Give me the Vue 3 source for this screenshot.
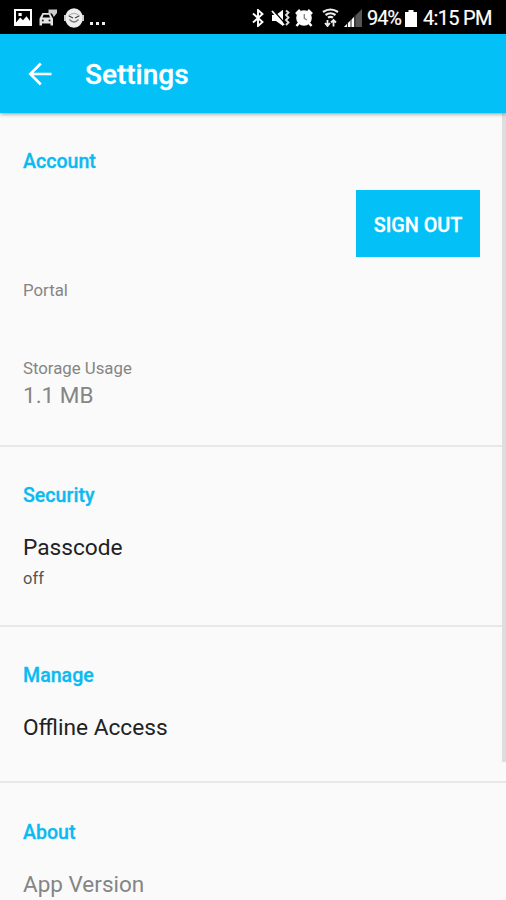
<script setup>
const sections = [
  { key: 'security', title: 'Security', rows: [{ label: 'Passcode', note: 'off' }] },
  { key: 'manage', title: 'Manage', rows: [{ label: 'Offline Access' }] },
  { key: 'about', title: 'About', rows: [{ label: 'App Version', muted: true }] },
]
</script>

<template>
  <div class="screen">
    <div class="status">
      <div class="left">
        <svg class="i-picture" width="18" height="17" viewBox="0 0 18 17">
          <rect x="1" y="1" width="16" height="15" fill="none" stroke="#fff" stroke-width="2" />
          <path d="M2 13.500L6.200 8.500L9 11.200L12.500 7.300L16 12V15H2Z" fill="#fff" />
          <rect x="4.500" y="4" width="3.200" height="3" fill="#fff" />
        </svg>
        <svg class="i-car" width="19" height="17" viewBox="0 0 19 17">
          <path d="M3.500 4H11L13 8L14 9.500V16.500H11.500V14.500H3V16.500H.5V9.500Z" fill="#e4e4e4" />
          <path d="M4.500 5.800H10L11 8.500H3.500Z" fill="#000" />
          <circle cx="3.800" cy="11.500" r="1" fill="#222" />
          <circle cx="10.500" cy="11.500" r="1" fill="#222" />
          <path d="M9.500 .5H18V4L14.800 8L13 4.500H9.500Z" fill="#ccc" />
        </svg>
        <svg class="i-face" width="20" height="20" viewBox="0 0 20 20">
          <ellipse cx="10" cy="10" rx="8.800" ry="9.800" fill="#eee" />
          <path d="M0 7H2V13H0ZM18 7H20V13H18Z" fill="#ccc" />
          <path d="M4 8.200Q10 2.500 16 8.200" fill="none" stroke="#aaa" />
          <path d="M5 8L9 10M15 8L11 10" fill="none" stroke="#444" stroke-width="1.300" />
          <path d="M5.500 11.500Q10 16.500 14.500 11.500" fill="none" stroke="#777" stroke-width="1.300" />
        </svg>
        <span class="dots"><i></i><i></i><i></i></span>
      </div>
      <div class="right">
        <svg width="12" height="18" viewBox="0 0 12 18">
          <path d="M1 4.500L10.500 13L6 17V1L10.500 5L1 13.500" fill="none" stroke="#fff" stroke-width="1.900" />
        </svg>
        <svg class="i-mute" width="20" height="18" viewBox="0 0 20 18">
          <path d="M1 6H5L12 .8V17L5 12H1Z" fill="#fff" />
          <path d="M2.500 1.500L14 14.500" stroke="#000" stroke-width="1.200" />
          <path d="M1 2L13 16" stroke="#fff" stroke-width="1.800" />
          <path d="M15 1.500L17.500 3.500L15 6L17.500 8.500L15 11L17.500 13.500L15 16" fill="none" stroke="#ddd" stroke-width="1.900" />
        </svg>
        <svg class="i-alarm" width="18" height="18" viewBox="0 0 18 18">
          <circle cx="9" cy="9" r="7.800" fill="#fff" />
          <path d="M1 5L5 1M13 1L17 5M4 14L1.500 17M14 14L16.500 17" stroke="#fff" stroke-width="2.500" />
          <path d="M9.300 5V9.300L12 11" fill="none" stroke="#888" stroke-width="1.400" />
        </svg>
        <svg class="i-wifi" width="17" height="19" viewBox="0 0 17 19">
          <path d="M1 4Q8.500-1 16 4M3.500 7Q8.500 3.500 13.500 7M6 9.700Q8.500 8 11 9.700" fill="none" stroke="#eee" stroke-width="2.200" />
          <path d="M5.500 18.500V12M3 15L5.500 18L8 15M11.500 18.500V12M9 14.500L11.500 12L14 14.500" fill="none" stroke="#eee" stroke-width="1.800" />
        </svg>
        <svg class="i-signal" width="18" height="18" viewBox="0 0 18 18">
          <path d="M0 18L18 0V18Z" fill="#555" />
          <path d="M0 18L10 8V18Z" fill="#fff" />
          <path d="M3.500 13V18M7 10V18M11 5V18" stroke="#222" />
        </svg>
        <span class="percent">94%</span>
        <svg class="i-battery" width="12" height="17" viewBox="0 0 12 17">
          <path d="M0 2H3.500V0H8.500V2H12V17H0Z" fill="#fff" />
        </svg>
        <span class="time">4:15 PM</span>
      </div>
    </div>
    <header class="bar">
      <svg class="back" width="24" height="24" viewBox="0 0 24 24">
        <path d="M23.500 12H2.500M12.800 1.500L2.300 12L12.800 22.500" fill="none" stroke="#fff" stroke-width="2.700" />
      </svg>
      <h1>Settings</h1>
    </header>
    <main class="body">
      <div class="list">
        <section class="section account">
          <h2>Account</h2>
          <button class="signout">SIGN OUT</button>
          <p class="small portal">Portal</p>
          <p class="small storage">Storage Usage</p>
          <p class="label muted">1.1 MB</p>
        </section>
        <section v-for="s in sections" :key="s.key" class="section" :class="s.key">
          <h2>{{ s.title }}</h2>
          <template v-for="r in s.rows" :key="r.label">
            <p class="label row" :class="{ muted: r.muted }">{{ r.label }}</p>
            <p v-if="r.note" class="small note">{{ r.note }}</p>
          </template>
        </section>
      </div>
      <div class="scrollbar"></div>
    </main>
  </div>
</template>

<style>
body { margin: 0; overflow: hidden; background: #fafafa; }
</style>

<style scoped>
.screen { width: 506px; height: 900px; overflow: hidden; display: flex; flex-direction: column; background: #fafafa; font-family: Roboto, sans-serif; }
h1, h2, p { margin: 0; }
svg { display: block; flex: none; }
.status { height: 34px; flex: none; box-sizing: border-box; display: flex; justify-content: space-between; padding: 0 15px 0 14px; background: #000; color: #fff; font-size: 20px; line-height: 37px; }
.left, .right { display: flex; align-items: center; height: 35px; }
.i-car { margin-left: 7px; }
.i-face { margin-left: 6px; }
.dots { display: flex; gap: 3px; margin: 11px 0 0 6px; }
.dots i { width: 3px; height: 3px; background: #eee; }
.i-mute { margin-left: 7px; }
.i-alarm { margin-left: 4px; }
.i-wifi { margin-left: 9px; }
.i-signal { margin-left: 5px; }
.percent, .time { display: block; height: 36px; white-space: nowrap; -webkit-text-stroke: 0.2px #fff; }
.percent { width: 35px; margin-left: 5px; letter-spacing: -1.1px; }
.i-battery { margin: 1px 0 0 3px; }
.time { width: 68px; margin-left: 6px; letter-spacing: -0.7px; }
.bar { position: relative; height: 79px; flex: none; display: flex; align-items: center; box-sizing: border-box; padding: 0 0 0 28px; background: #03c0f7; box-shadow: 0 1px 4px rgba(0, 0, 0, 0.4); z-index: 1; }
h1 { margin: 2px 0 0 33px; color: #fff; font-size: 28px; line-height: 34px; font-weight: 500; -webkit-text-stroke: 0.3px #fff; }
.body { flex: 1; min-height: 0; display: flex; overflow: hidden; }
.list { flex: 1; margin-right: -4px; }
.scrollbar { position: relative; width: 4px; height: 649px; background: #dedede; }
.section { box-sizing: border-box; display: flex; flex-direction: column; padding: 37px 26px 0 23px; border-bottom: 2px solid #e8e8e8; }
.account { height: 334px; }
.security { height: 180px; }
.manage { height: 156px; }
.about { height: 150px; padding-top: 38px; }
h2 { color: #0cbaf2; font-size: 19.600px; line-height: 24px; font-weight: 500; -webkit-text-stroke: 0.3px #0cbaf2; }
.signout { align-self: flex-end; width: 124px; height: 67px; margin: 16px 0 0; padding: 4px 0 0; border: 0; background: #03c0f7; color: #fff; font: 500 19.800px/24px Roboto, sans-serif; -webkit-text-stroke: 0.3px #fff; }
.small { color: #858585; font-size: 16.800px; line-height: 20px; }
.portal { margin-top: 23px; }
.storage { margin: 58px 0 3px; }
.label { color: #222; font-size: 22.700px; line-height: 28px; }
.row { margin-top: 26px; }
.about .row { margin-top: 25px; }
.label.muted { color: #858585; font-size: 22.500px; }
.note { margin-top: 7px; color: #555; font-size: 16.500px; }
</style>
